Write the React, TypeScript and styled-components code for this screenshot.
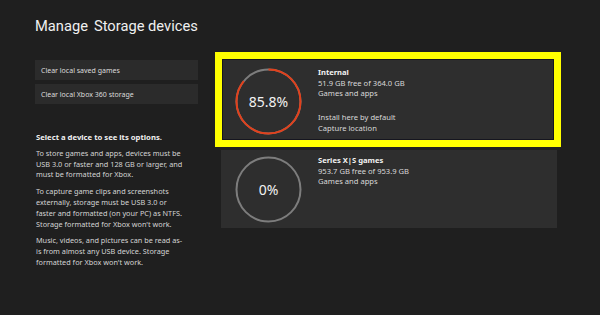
import React from "react";
import styled, { createGlobalStyle } from "styled-components";

const Global = createGlobalStyle`
  html, body { margin: 0; padding: 0; background: #1f1f1f; }
  body { width: 600px; height: 315px; overflow: hidden; font-family: "Noto Sans", "Open Sans", sans-serif; color: #e6e6e6; }
`;

const Page = styled.div`
  width: 600px;
  height: 315px;
  box-sizing: border-box;
  padding: 15px 0 0 35px;
  background: #1f1f1f;
`;

const Title = styled.h1`
  margin: 0;
  display: flex;
  gap: 6px;
  font-family: Roboto, "Noto Sans", sans-serif;
  font-size: 14.7px;
  font-weight: 400;
  line-height: 22px;
  color: #f0f0f0;
`;

const Columns = styled.div`
  display: grid;
  grid-template-columns: 163px 336px;
  column-gap: 23px;
  margin-top: 20px;
`;

const Left = styled.div`
  display: flex;
  flex-direction: column;
  gap: 4px;
  padding-top: 3px;
`;

const ActionButton = styled.div`
  height: 20px;
  display: flex;
  align-items: center;
  padding-left: 6px;
  background: #2b2b2b;
  font-size: 7px;
  color: #dcdcdc;
`;

const Info = styled.div`
  margin-top: 24px;
  margin-left: 1px;
  display: flex;
  flex-direction: column;
  gap: 6px;
  font-size: 7.3px;
  line-height: 10.8px;
  color: #d4d4d4;
  white-space: nowrap;
`;

const Heading = styled.p`
  margin: 0 0 -1px;
  font-size: 7.7px;
  font-weight: 700;
  color: #f0f0f0;
`;

const Para = styled.p`
  margin: 0;
  display: flex;
  flex-direction: column;
`;

const Right = styled.div`
  display: flex;
  flex-direction: column;
  gap: 5px;
`;

const Card = styled.div<{ $h: number }>`
  position: relative;
  height: ${(p) => p.$h}px;
  background: #2e2e2e;
  display: flex;
  align-items: flex-start;
`;

const Highlight = styled.div`
  position: absolute;
  left: -6px;
  right: -4px;
  top: -5px;
  bottom: -2px;
  border: 7px solid #ffff00;
  box-shadow: inset 0 0 0 1px #15151f;
  pointer-events: none;
`;

const Ring = styled.div<{ $top: number }>`
  position: relative;
  width: 67px;
  height: 67px;
  margin: ${(p) => p.$top}px 0 0 14px;
  flex: none;
  display: flex;
  align-items: center;
  justify-content: center;
`;

const RingSvg = styled.svg`
  position: absolute;
  inset: 0;
`;

const Percent = styled.span`
  position: relative;
  font-size: 14px;
  color: #f2f2f2;
`;

const Details = styled.div<{ $top: number }>`
  margin: ${(p) => p.$top}px 0 0 16px;
  font-size: 7.6px;
  line-height: 10.7px;
  color: #d8d8d8;
`;

const Name = styled.div`
  font-weight: 700;
  color: #f2f2f2;
`;

const Line = styled.span``;

const Spacer = styled.div`
  height: 13px;
`;

function Gauge({ pct }: { pct: number }) {
  const r = 32;
  const c = 2 * Math.PI * r;
  const used = (pct / 100) * c;
  return (
    <RingSvg width="67" height="67" viewBox="0 0 67 67">
      <circle cx="33.5" cy="33.5" r={r} fill="none" stroke="#7d7d7d" strokeWidth="2" />
      {pct > 0 && (
        <circle
          cx="33.5"
          cy="33.5"
          r={r}
          fill="none"
          stroke="#e2401b"
          strokeWidth="2"
          strokeDasharray={`${used} ${c}`}
          transform="rotate(-90 33.5 33.5)"
        />
      )}
    </RingSvg>
  );
}

const paragraphs = [
  ["To store games and apps, devices must be", "USB 3.0 or faster and 128 GB or larger, and", "must be formatted for Xbox."],
  [
    "To capture game clips and screenshots",
    "externally, storage must be USB 3.0 or",
    "faster and formatted (on your PC) as NTFS.",
    "Storage formatted for Xbox won't work.",
  ],
  ["Music, videos, and pictures can be read as-", "is from almost any USB device. Storage", "formatted for Xbox won't work."],
];

export default function App() {
  return (
    <>
      <Global />
      <Page>
        <Title>
          <span>Manage</span>
          <span>Storage devices</span>
        </Title>
        <Columns>
          <Left>
            <ActionButton>Clear local saved games</ActionButton>
            <ActionButton>Clear local Xbox 360 storage</ActionButton>
            <Info>
              <Heading>Select a device to see its options.</Heading>
              {paragraphs.map((lines, i) => (
                <Para key={i}>
                  {lines.map((l, j) => (
                    <Line key={j}>{l}</Line>
                  ))}
                </Para>
              ))}
            </Info>
          </Left>
          <Right>
            <Card $h={88}>
              <Ring $top={11}>
                <Gauge pct={85.8} />
                <Percent>85.8%</Percent>
              </Ring>
              <Details $top={10}>
                <Name>Internal</Name>
                <div>51.9 GB free of 364.0 GB</div>
                <div>Games and apps</div>
                <Spacer />
                <div>Install here by default</div>
                <div>Capture location</div>
              </Details>
              <Highlight />
            </Card>
            <Card $h={78}>
              <Ring $top={6}>
                <Gauge pct={0} />
                <Percent>0%</Percent>
              </Ring>
              <Details $top={5}>
                <Name>Series X|S games</Name>
                <div>953.7 GB free of 953.9 GB</div>
                <div>Games and apps</div>
              </Details>
            </Card>
          </Right>
        </Columns>
      </Page>
    </>
  );
}
